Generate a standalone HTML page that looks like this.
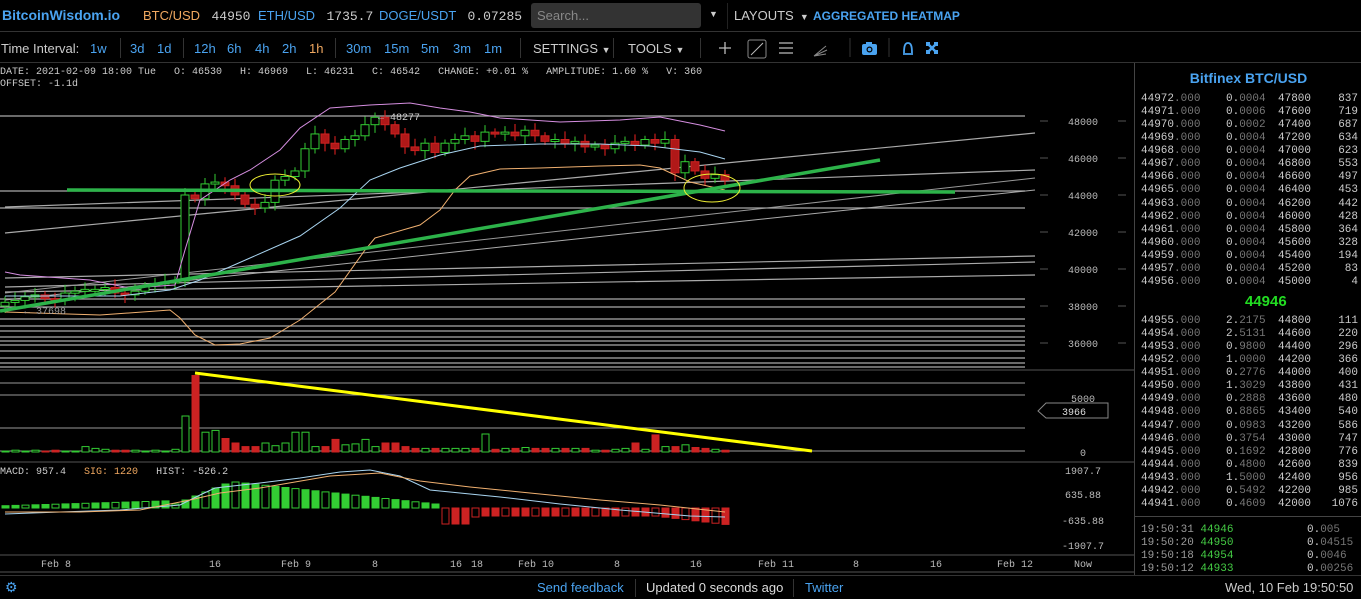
<!DOCTYPE html>
<html><head><meta charset="utf-8"><style>
*{margin:0;padding:0;box-sizing:border-box}
body{width:1361px;height:599px;background:#000;overflow:hidden;font-family:"Liberation Sans",sans-serif;color:#ccc;position:relative}
.mono{font-family:"Liberation Mono","DejaVu Sans Mono",monospace}
#hdr{position:absolute;left:0;top:0;width:1361px;height:32px;border-bottom:1px solid #333;font-size:13px}
#hdr span{position:absolute;top:8px}
.blue{color:#4aa3f0}
#tb{position:absolute;left:0;top:32px;width:1361px;height:31px;border-bottom:1px solid #333;font-size:13px}
#tb span{position:absolute;top:9px}
.sep{position:absolute;top:6px;width:1px;height:20px;background:#333}
#ob{position:absolute;left:1134px;top:63px;width:227px;height:512px;border-left:1px solid #444;font-size:11px;color:#ccc}
.r{position:absolute;height:13px;line-height:13px;left:0;width:227px}
.r b{font-weight:normal;position:absolute}
#ft{position:absolute;left:0;top:575px;width:1361px;height:24px;background:#000;border-top:1px solid #333;font-size:13px}
#ft span{position:absolute;top:4px}
</style></head><body>
<div id="hdr">
<span class="blue" style="left:2px;font-weight:bold;font-size:14px;top:7px">BitcoinWisdom.io</span>
<span style="left:143px;color:#f0a860">BTC/USD <span class="mono" style="position:static;color:#ccc">&nbsp;44950</span></span>
<span class="blue" style="left:258px">ETH/USD <span class="mono" style="position:static;color:#ccc">&nbsp;1735.7</span></span>
<span class="blue" style="left:379px">DOGE/USDT <span class="mono" style="position:static;color:#ccc">&nbsp;0.07285</span></span>
<div style="position:absolute;left:531px;top:3px;width:170px;height:25px;background:#333;border-radius:3px;color:#888;padding:5px 6px">Search...</div>
<span style="left:709px;top:9px;font-size:9px;color:#ccc">▼</span>
<div style="position:absolute;left:727px;top:3px;width:1px;height:26px;background:#222"></div>
<span style="left:734px;color:#ccc">LAYOUTS <span style="position:static;font-size:9px">&nbsp;▼</span></span>
<span class="blue" style="left:813px;font-weight:bold;font-size:12px;top:9px">AGGREGATED HEATMAP</span>
</div>
<div id="tb">
<span style="left:1px;color:#ccc">Time Interval:</span>
<span class="blue" style="left:90px">1w</span><div class="sep" style="left:120px"></div>
<span class="blue" style="left:130px">3d</span><span class="blue" style="left:157px">1d</span><div class="sep" style="left:183px"></div>
<span class="blue" style="left:194px">12h</span><span class="blue" style="left:227px">6h</span><span class="blue" style="left:255px">4h</span><span class="blue" style="left:282px">2h</span><span style="left:309px;color:#f0a860">1h</span><div class="sep" style="left:335px"></div>
<span class="blue" style="left:346px">30m</span><span class="blue" style="left:384px">15m</span><span class="blue" style="left:421px">5m</span><span class="blue" style="left:453px">3m</span><span class="blue" style="left:484px">1m</span><div class="sep" style="left:520px"></div>
<span style="left:533px">SETTINGS <span style="position:static;font-size:9px">▼</span></span><div class="sep" style="left:613px"></div>
<span style="left:628px">TOOLS <span style="position:static;font-size:9px">▼</span></span><div class="sep" style="left:700px"></div>
<svg style="position:absolute;left:700px;top:0" width="260" height="31">
<path d="M25 10v12M19 16h12" stroke="#bbb" stroke-width="1.3"/>
<rect x="48" y="8" width="18" height="18" rx="2" fill="none" stroke="#888"/><path d="M51 23L63 11" stroke="#bbb"/>
<path d="M79 11h14M79 16h14M79 21h14" stroke="#bbb" stroke-width="1.2"/>
<path d="M114 24L126 14M114 24L127 18M114 24L126 22" stroke="#888"/>
<path d="M150 6v19" stroke="#333"/>
<rect x="162" y="12" width="15" height="11" rx="2" fill="#4aa3f0"/><rect x="166" y="10" width="6" height="3" fill="#4aa3f0"/><circle cx="169.5" cy="17.5" r="3" fill="#000"/><circle cx="169.5" cy="17.5" r="1.8" fill="#4aa3f0"/>
<path d="M189 6v19" stroke="#333"/>
<path d="M203 22h10M204 21c0-7 1-10 4-10s4 3 4 10" fill="none" stroke="#4aa3f0" stroke-width="1.8"/>
<path d="M227 11l10 10M237 11l-10 10" stroke="#4aa3f0" stroke-width="2.5"/><path d="M226 10h4v4h-4zM234 10h4v4h-4zM226 18h4v4h-4zM234 18h4v4h-4z" fill="#4aa3f0"/>
</svg>
</div>
<svg id="ch" style="position:absolute;left:0;top:63px" width="1134" height="512" font-family="Liberation Mono,monospace" font-size="10">
<g transform="translate(0,-63)" id="g"></g>
</svg>
<div class="mono" style="position:absolute;left:0;top:67px;font-size:10px;color:#ccc;white-space:pre;line-height:12px">DATE: 2021-02-09 18:00 Tue   O: 46530   H: 46969   L: 46231   C: 46542   CHANGE: +0.01 %   AMPLITUDE: 1.60 %   V: 360
OFFSET: -1.1d</div>
<div class="mono" style="position:absolute;left:0;top:467px;font-size:10px;white-space:pre"><span style="color:#ccc">MACD: 957.4</span>   <span style="color:#f0a860">SIG: 1220</span>   <span style="color:#ccc">HIST: -526.2</span></div>
<div id="ob" class="mono"></div>
<div id="ft">
<span style="left:5px;top:3px;color:#4aa3f0;font-size:14px">⚙</span>
<span class="blue" style="left:537px">Send feedback</span>
<div class="sep" style="left:635px;top:3px;height:18px"></div>
<span style="left:646px;color:#ddd">Updated 0 seconds ago</span>
<div class="sep" style="left:793px;top:3px;height:18px"></div>
<span class="blue" style="left:805px">Twitter</span>
<span style="left:1225px;color:#ccc">Wed, 10 Feb 19:50:50</span>
</div>
<script>
var g=document.getElementById('g'),s='';
function L(x1,y1,x2,y2,c,w){s+='<line x1="'+x1+'" y1="'+y1+'" x2="'+x2+'" y2="'+y2+'" stroke="'+c+'" stroke-width="'+(w||1)+'"/>';}
function T(x,y,t,c,a){s+='<text x="'+x+'" y="'+y+'" fill="'+(c||'#bbb')+'" text-anchor="'+(a||'start')+'">'+t+'</text>';}
function P(pts,c,w){s+='<polyline fill="none" stroke="'+c+'" stroke-width="'+(w||1)+'" points="'+pts+'"/>';}
[116,191,208,299,307,319,326,331,337,341,345,351,358,363,367].forEach(function(y){L(0,y,1025,y,'#aaa',1.3)});
L(0,370,1134,370,'#555');L(0,383,1025,383,'#999');L(0,395,1025,395,'#999');L(0,428,1025,428,'#999');L(0,451,1025,451,'#999');
L(0,462,1134,462,'#555');L(0,555,1134,555,'#555');L(0,572,1134,572,'#555');
L(5,207,1035,170,'#aaa',1.2);L(5,233,1035,133,'#aaa',1.2);L(5,278,1035,256,'#aaa',1.2);L(5,287,1035,262,'#aaa',1.2);L(5,292,1035,275,'#aaa',1.2);L(5,300,1035,190,'#aaa',1);L(5,293,1035,178,'#999',1);
[[48000,121],[46000,158],[44000,195],[42000,232],[40000,269],[38000,306],[36000,343]].forEach(function(a){T(1083,a[1]+4,a[0],'#bbb','middle');L(1040,a[1],1048,a[1],'#555');L(1118,a[1],1126,a[1],'#555')});
T(1083,402,'5000','#bbb','middle');T(1083,456,'0','#bbb','middle');
s+='<path d="M1038 411l8-8h62v15h-62z" fill="#000" stroke="#888"/>';T(1074,415,'3966','#ddd','middle');
[['1907.7',470],['635.88',494],['-635.88',520],['-1907.7',545]].forEach(function(a){T(1083,a[1]+4,a[0],'#bbb','middle')});
[['Feb 8',56],['16',215],['Feb 9',296],['8',375],['16',456],['18',477],['Feb 10',536],['8',617],['16',696],['Feb 11',776],['8',856],['16',936],['Feb 12',1015],['Now',1083]].forEach(function(a){T(a[1],567,a[0],'#bbb','middle')});
var C=[38000,38200,38300,38500,38600,38400,38300,38700,38800,38900,38900,39000,38700,38600,38800,39100,39200,39300,39350,44000,43800,44600,44700,44500,44000,43500,43300,43600,44800,45000,45300,46500,47300,46800,46500,47000,47200,47800,48200,47800,47300,46600,46400,46800,46300,46800,47000,47200,46900,47400,47300,47400,47200,47500,47200,46900,47000,46800,46900,46600,46700,46500,46800,46900,46700,47000,46800,47000,45200,45800,45300,44900,45100,44800];
function Y(p){return 121+(48000-p)*0.0185}
var vol=[1,2,1,2,1,2,1,1,6,4,3,2,2,2,1,2,1,3,40,85,22,24,15,10,6,6,10,7,10,22,22,6,6,14,8,9,14,6,10,10,6,4,4,4,4,4,4,4,20,3,4,4,5,4,4,4,4,4,4,2,2,3,4,10,3,19,6,6,8,5,4,3,2,1];
for(var i=1;i<C.length;i++){var x=5+10*(i-1),o=C[i-1],c=C[i],up=c>=o,col=up?'#3c3':'#c22';
var hi=Math.max(o,c)+200+(i*37%5)*60,lo=Math.min(o,c)-200-(i*53%5)*60;
L(x,Y(hi),x,Y(lo),up?'#3c3':'#e22');
var y1=Y(Math.max(o,c)),h=Math.max(2,Y(Math.min(o,c))-y1);
s+='<rect x="'+(x-4)+'" y="'+y1+'" width="8" height="'+h+'" fill="'+(up?'#000':'#b01818')+'" stroke="'+col+'"/>';
var v=vol[i-1]||2,vh=v*0.9;s+='<rect x="'+(x-3)+'" y="'+(452-vh)+'" width="7" height="'+vh+'" fill="'+(up?'#000':'#c22')+'" stroke="'+(up?'#3c3':'#c22')+'"/>';
var mh=(i<24?(i<18?2+i*0.3:(i-17)*4):(i<45?26-(i-24)*1.1:(i<50?-12+(i-45):-8-(i>66?(i-66)*1.2:0))));
if(i>=45&&i<48)mh=-16;
var mc=mh>=0?'#3c3':'#c22',my=508;var fill=(i%3==0)?'#000':mc;
s+='<rect x="'+(x-3)+'" y="'+(mh>=0?my-mh:my)+'" width="7" height="'+Math.abs(mh)+'" fill="'+fill+'" stroke="'+mc+'"/>';
}
P('5,272 20,275 90,280 130,288 175,285 185,250 200,200 230,180 250,170 280,150 300,128 330,108 370,105 410,103 440,108 470,112 500,118 560,122 620,120 660,117 700,125 725,131','#d58ee0');
P('5,296 120,296 170,290 200,280 250,258 300,236 340,208 370,180 400,168 440,155 480,146 540,144 600,144 650,146 700,152 725,159','#a8d4f0');
P('5,312 100,315 170,310 180,318 195,335 215,345 240,344 270,338 300,320 335,292 365,250 375,238 420,225 440,210 455,190 470,176 500,169 540,168 600,166 640,165 660,168 690,182 725,190','#f0b070');
L(67,190,955,192,'#2db34a',3.5);L(0,311,880,160,'#2db34a',3.5);
s+='<ellipse cx="275" cy="185" rx="25" ry="11" fill="none" stroke="#ee3"/><ellipse cx="712" cy="188" rx="28" ry="14" fill="none" stroke="#ee3"/>';
L(195,373,812,451,'#ff0',3);
T(378,120,'← 48277','#ccc');T(24,314,'← 37698','#999');
P('5,514 60,512 120,510 180,505 200,495 215,488 260,483 300,478 340,472 370,470 400,476 430,490 500,497 560,504 620,510 690,516 725,517','#a8d4f0');
P('5,512 80,512 140,510 190,500 220,493 260,488 330,476 380,473 420,481 470,487 520,492 600,500 660,505 725,512','#f0b070');
g.innerHTML=s;
var ob=document.getElementById('ob'),h='<div style="position:absolute;top:7px;width:227px;text-align:center;font-family:Liberation Sans,sans-serif;font-weight:bold;font-size:14px;color:#4aa3f0">Bitfinex BTC/USD</div>';
var a1=[44972,44971,44970,44969,44968,44967,44966,44965,44963,44962,44961,44960,44959,44957,44956],am1=['0.0004','0.0006','0.0002','0.0004','0.0004','0.0004','0.0004','0.0004','0.0004','0.0004','0.0004','0.0004','0.0004','0.0004','0.0004'];
var p2=[47800,47600,47400,47200,47000,46800,46600,46400,46200,46000,45800,45600,45400,45200,45000],q1=[837,719,687,634,623,553,497,453,442,428,364,328,194,83,4];
function row(t,a,b,c,d){return '<div class="r" style="top:'+t+'px"><b style="left:6px">'+a+'<span style="color:#777">.000</span></b><b style="left:91px">'+b.slice(0,2)+'<span style="color:#777">'+b.slice(2)+'</span></b><b style="left:143px">'+c+'</b><b style="right:4px">'+d+'</b></div>'}
for(var i=0;i<15;i++)h+=row(30+i*13.07,a1[i],am1[i],p2[i],q1[i]);
h+='<div style="position:absolute;top:230px;left:110px;font-family:Liberation Sans,sans-serif;font-weight:bold;font-size:15px;color:#2d2">44946</div>';
var a2=[44955,44954,44953,44952,44951,44950,44949,44948,44947,44946,44945,44944,44943,44942,44941],am2=['2.2175','2.5131','0.9800','1.0000','0.2776','1.3029','0.2888','0.8865','0.0983','0.3754','0.1692','0.4800','1.5000','0.5492','0.4609'];
var p3=[44800,44600,44400,44200,44000,43800,43600,43400,43200,43000,42800,42600,42400,42200,42000],q2=[111,220,296,366,400,431,480,540,586,747,776,839,956,985,1076];
for(var i=0;i<15;i++)h+=row(252+i*13.07,a2[i],am2[i],p3[i],q2[i]);
h+='<div style="position:absolute;top:453px;left:0;width:227px;height:1px;background:#444"></div>';
var tr=[['19:50:31','44946','0.','005'],['19:50:20','44950','0.','04515'],['19:50:18','44954','0.','0046'],['19:50:12','44933','0.','00256']];
tr.forEach(function(r,k){h+='<div class="r" style="top:'+(461+k*13)+'px;color:#999"><b style="left:6px">'+r[0]+' <span style="color:#4c4">'+r[1]+'</span></b><b style="left:172px;color:#ccc">'+r[2]+'<span style="color:#777">'+r[3]+'</span></b></div>'});
ob.innerHTML=h;
</script>
</body></html>
